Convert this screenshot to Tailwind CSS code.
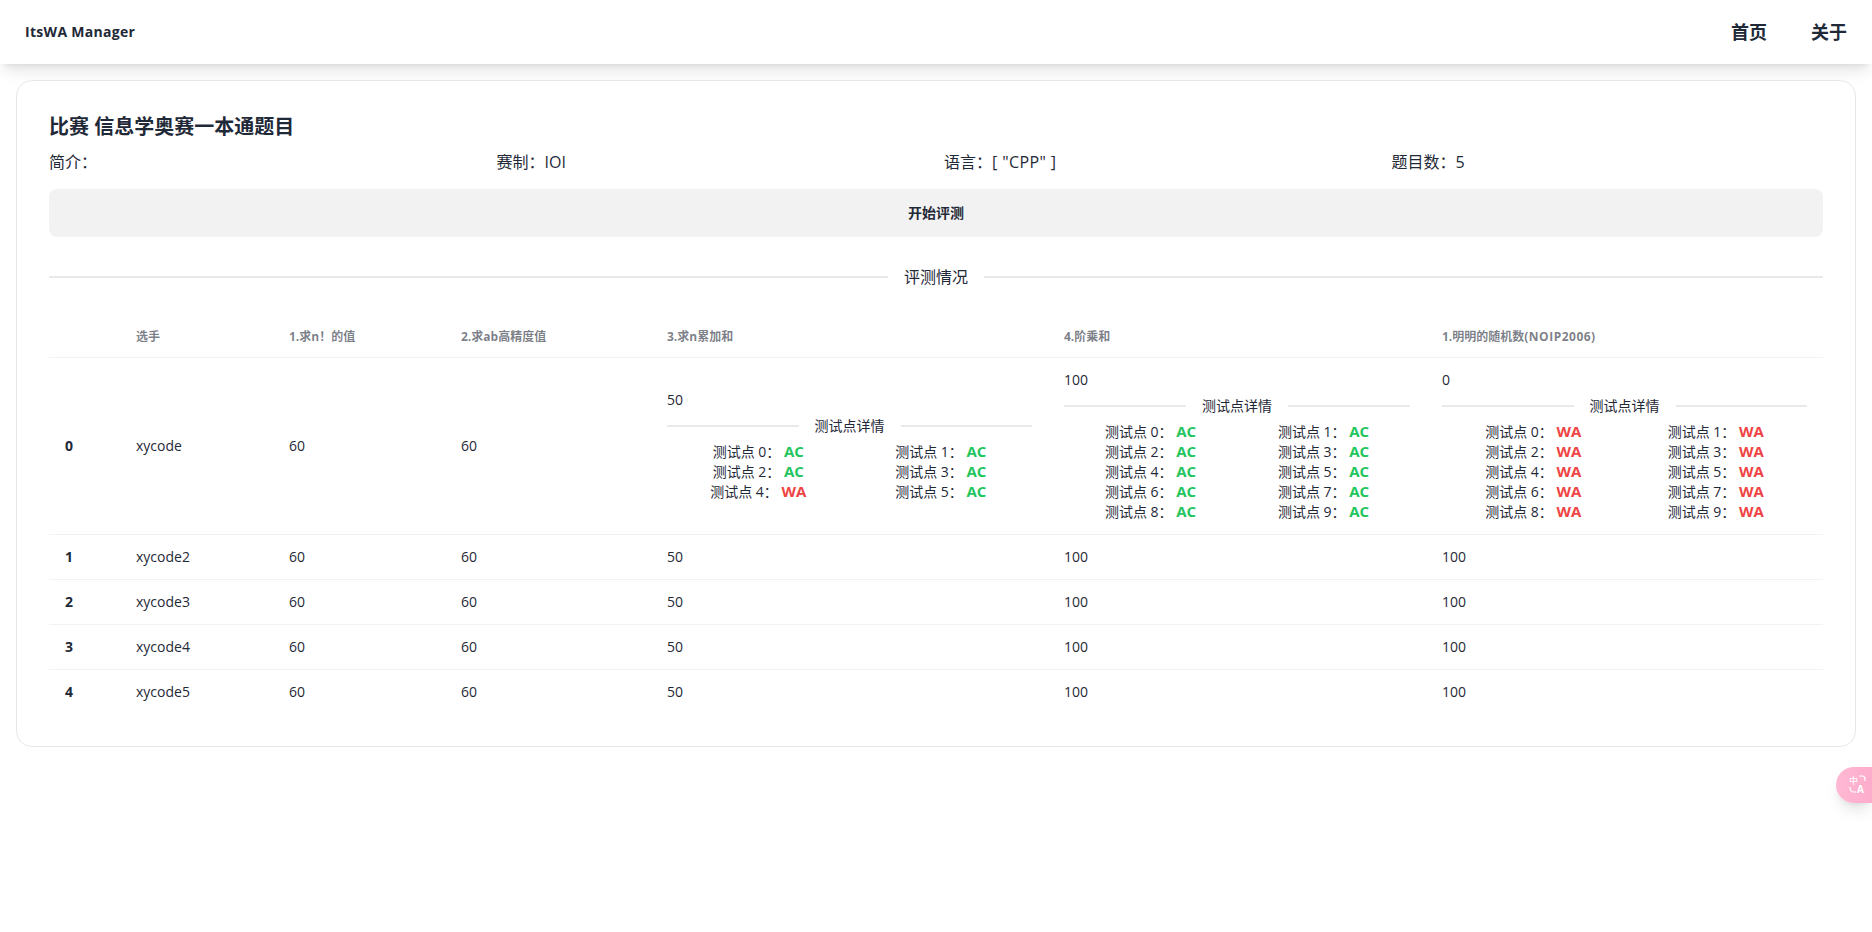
<!DOCTYPE html>
<html lang="zh-CN">
<head>
    <meta charset="UTF-8">
    <meta name="viewport" content="width=device-width, initial-scale=1.0">
    <title>ItsWA Manager</title>
    <script src="https://cdn.jsdelivr.net/npm/@tailwindcss/browser@4"></script>
</head>
<body class="bg-white text-[#1f2937] text-sm font-['Open_Sans','Noto_Sans_CJK_SC',sans-serif] h-[932px] overflow-hidden relative">
    <nav class="h-16 bg-white shadow-lg rounded-t-2xl flex items-center justify-between pl-[25px] pr-[25px]">
        <a class="font-bold text-sm tracking-[0.3px]">ItsWA Manager</a>
        <div class="flex gap-11 text-lg font-bold">
            <a>首页</a>
            <a>关于</a>
        </div>
    </nav>

    <main class="mx-4 mt-4 bg-white border border-gray-200 rounded-2xl p-8 h-[667px]">
        <h2 class="text-xl font-bold leading-7">比赛 信息学奥赛一本通题目</h2>
        <div class="grid grid-cols-4 gap-4 text-base leading-6 mt-[9px]">
            <div>简介：</div>
            <div>赛制：IOI</div>
            <div>语言：<span class="tracking-[0.4px]">[ "CPP" ]</span></div>
            <div>题目数：5</div>
        </div>
        <button class="w-full h-12 mt-[15px] bg-[#f2f2f2] rounded-lg text-sm font-bold">开始评测</button>
        <div class="flex items-center gap-4 h-4 my-8 text-base">
            <div class="flex-1 h-0.5 bg-[#1f2937]/10"></div>
            <span>评测情况</span>
            <div class="flex-1 h-0.5 bg-[#1f2937]/10"></div>
        </div>
        <table class="w-full table-fixed text-left">
            <thead>
                <tr class="border-b border-[#f2f2f3] text-xs font-bold text-[#1f2937]/60">
                    <th class="w-[71px] py-3 px-4"></th>
                    <th class="w-[153px] py-3 px-4">选手</th>
                    <th class="w-[172px] py-3 px-4">1.求n！的值</th>
                    <th class="w-[206px] py-3 px-4">2.求ab高精度值</th>
                    <th class="w-[397px] py-3 px-4">3.求n累加和</th>
                    <th class="w-[378px] py-3 px-4">4.阶乘和</th>
                    <th class="w-[397px] py-3 px-4">1.明明的随机数<span class="tracking-[0.5px]">(NOIP2006)</span></th>
                </tr>
            </thead>
            <tbody id="rows"></tbody>
        </table>
    </main>

    <div class="absolute right-0 top-[767px] w-9 h-9 rounded-l-full bg-linear-to-r from-[#feb9d3] to-[#fdaccb] shadow-lg flex items-center pl-[11px]">
        <svg width="22" height="22" viewBox="0 0 22 22" fill="none" stroke="white" stroke-width="1.2">
            <text x="2" y="10" font-size="9" fill="white" stroke="none" font-family="Noto Sans CJK SC">中</text>
            <text x="10" y="19" font-size="10" font-weight="700" fill="white" stroke="none" font-family="Open Sans">A</text>
            <path d="M12 2h3a3 3 0 0 1 3 3v2"/>
            <path d="M3 13v1a4 4 0 0 0 4 4h2"/>
        </svg>
    </div>

    <script>
        const players = ['xycode', 'xycode2', 'xycode3', 'xycode4', 'xycode5'];
        const scores = [[60, 60, 50, 100, 0], [60, 60, 50, 100, 100], [60, 60, 50, 100, 100], [60, 60, 50, 100, 100], [60, 60, 50, 100, 100]];
        const details = {
            2: ['AC', 'AC', 'AC', 'AC', 'WA', 'AC'],
            3: Array(10).fill('AC'),
            4: Array(10).fill('WA')
        };

        function renderDetail(list) {
            const items = list.map((r, i) => `
                <div class="text-center h-5">测试点 ${i}： <b class="font-bold text-[15px] leading-none ${r === 'AC' ? 'text-[#22c55e]' : 'text-[#ef4444]'}">${r}</b></div>
            `).join('');
            return `
                <div class="flex items-center gap-4 h-4 my-2">
                    <div class="flex-1 h-0.5 bg-[#1f2937]/10"></div>
                    <span>测试点详情</span>
                    <div class="flex-1 h-0.5 bg-[#1f2937]/10"></div>
                </div>
                <div class="grid grid-cols-2 leading-5">${items}</div>
            `;
        }

        document.getElementById('rows').innerHTML = players.map((name, row) => `
            <tr class="${row < 4 ? 'border-b border-[#f2f2f3]' : ''}">
                <th class="py-3 px-4 font-bold">${row}</th>
                <td class="py-3 px-4">${name}</td>
                ${scores[row].map((s, col) => `
                    <td class="py-3 px-4">${s}${row === 0 && details[col] ? renderDetail(details[col]) : ''}</td>
                `).join('')}
            </tr>
        `).join('');
    </script>
</body>
</html>
